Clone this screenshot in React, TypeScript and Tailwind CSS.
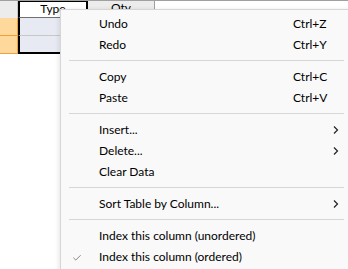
import { Check } from 'lucide-react';

type Item = { label: string; shortcut?: string; sub?: boolean; checked?: boolean };

const groups: Item[][] = [
  [
    { label: 'Undo', shortcut: 'Ctrl+Z' },
    { label: 'Redo', shortcut: 'Ctrl+Y' },
  ],
  [
    { label: 'Copy', shortcut: 'Ctrl+C' },
    { label: 'Paste', shortcut: 'Ctrl+V' },
  ],
  [
    { label: 'Insert...', sub: true },
    { label: 'Delete...', sub: true },
    { label: 'Clear Data' },
  ],
  [{ label: 'Sort Table by Column...', sub: true }],
  [
    { label: 'Index this column (unordered)' },
    { label: 'Index this column (ordered)', checked: true },
  ],
];

function MenuRow({ item }: { item: Item }) {
  return (
    <div className="relative flex items-center h-[21px] pl-[38px] pr-3 pt-px text-[12px] text-black">
      {item.checked && (
        <Check className="absolute left-[11px] top-[7px] w-[10px] h-[10px] text-[#444]" strokeWidth={1.5} />
      )}
      <span className="flex-1">{item.label}</span>
      {item.shortcut && <span className="absolute left-[232px]">{item.shortcut}</span>}
      {item.sub && (
        <svg className="absolute left-[272px] top-[7px]" width="6" height="8" viewBox="0 0 6 8">
          <path d="M1 0.5 L4.5 4 L1 7.5" fill="none" stroke="#222" strokeWidth="1.2" />
        </svg>
      )}
    </div>
  );
}

export default function App() {
  return (
    <div
      className="relative w-[348px] h-[269px] overflow-hidden bg-white"
      style={{ fontFamily: 'Lato, "Open Sans", sans-serif' }}
    >
      {/* background table */}
      <div className="flex flex-col text-[12px] text-black">
        <div className="flex h-[18px] border-t border-[#a0a0a0]">
          <div className="w-[18px] bg-[#ececec] border-r border-[#c8c8c8]" />
          <div className="w-[70px] bg-white border-x-2 border-t border-black border-b border-b-[#707070] text-center leading-[14px]">
            Type
          </div>
          <div className="w-[67px] bg-[#ececec] border-r border-[#a0a0a0] text-center leading-[14px]">Qty</div>
          <div className="flex-1 bg-white" />
        </div>
        {[0, 1].map((r) => (
          <div key={r} className="flex h-[18px]">
            <div className="w-[18px] bg-[#ffd89b] border-r border-b border-[#f0a040]" />
            <div
              className={`w-[70px] bg-[#e8eaf3] border-x-2 border-black ${
                r === 1 ? 'border-b-2 border-b-black' : 'border-b border-b-[#c8c8c8]'
              }`}
            />
            <div className="flex-1 bg-white" />
          </div>
        ))}
      </div>

      {/* context menu */}
      <div className="absolute left-[60px] top-[9px] w-[300px] h-[280px] bg-[#f9f9f9] border border-[#d6d6d6] pt-[3px] shadow-[-2px_0_4px_rgba(0,0,0,0.08)]">
        {groups.map((g, gi) => (
          <div key={gi}>
            {gi > 0 && (
              <div className="h-[11px] flex items-center pl-[8px] pr-[15px]">
                <div className="h-px w-full bg-[#d7d7d7]" />
              </div>
            )}
            {g.map((item) => (
              <MenuRow key={item.label} item={item} />
            ))}
          </div>
        ))}
      </div>
    </div>
  );
}
